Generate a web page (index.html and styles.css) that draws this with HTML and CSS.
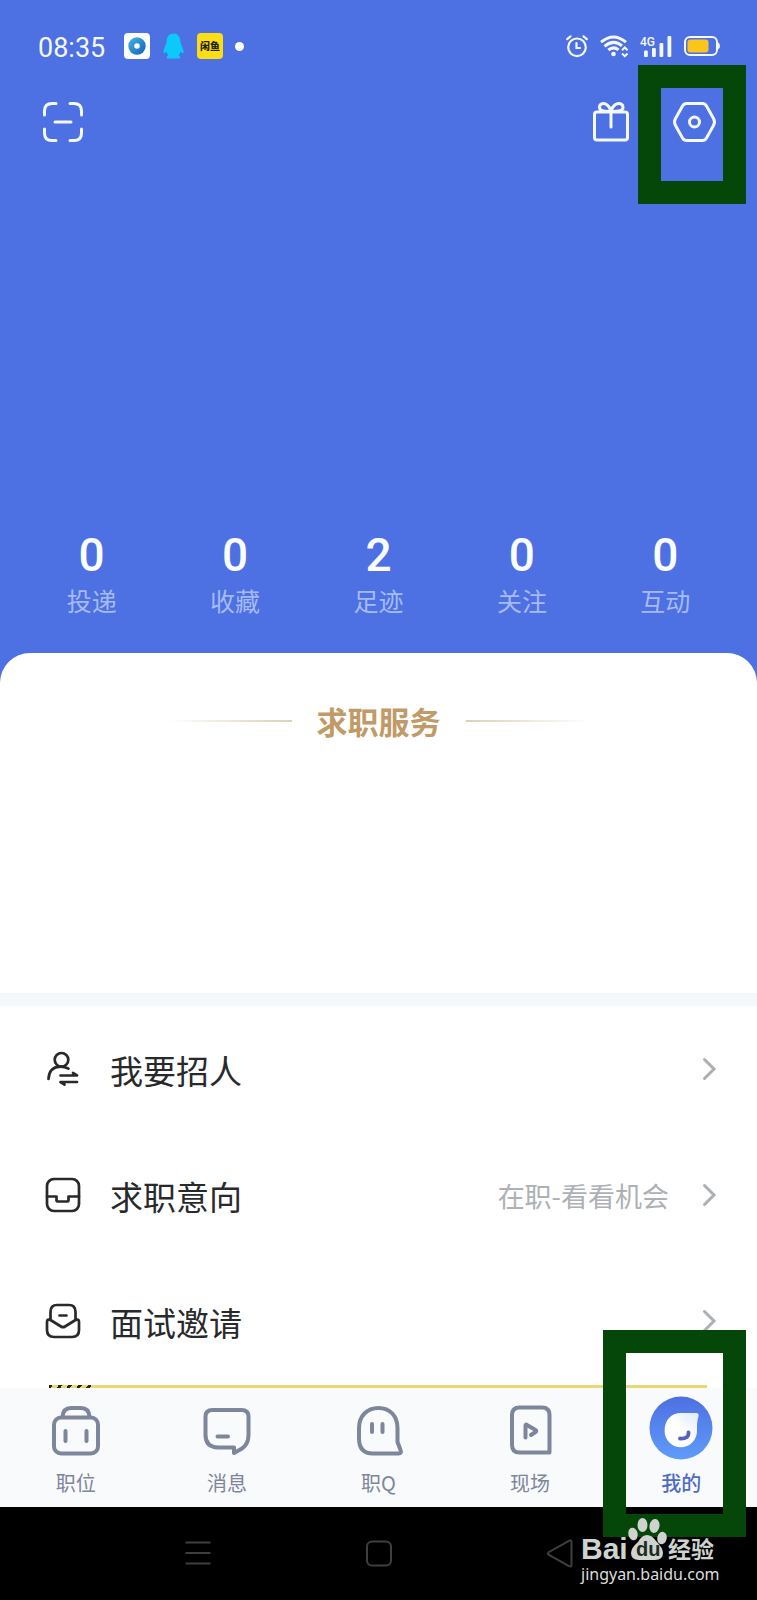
FILE: index.html
```html
<!DOCTYPE html>
<html lang="zh-CN">
<head>
<meta charset="utf-8">
<meta name="viewport" content="width=device-width, initial-scale=1">
<title>我的</title>
<link rel="stylesheet" href="styles.css">
</head>
<body>
<div class="app">
  <header class="hero">
    <div class="status">
      <div class="status-left">
        <span class="time">08:35</span>
        <svg class="app-icon" viewBox="0 0 26 26" aria-hidden="true">
          <defs><linearGradient id="disc" x1="0" y1="0" x2="1" y2="1"><stop offset="0" stop-color="#45b4ea"/><stop offset="1" stop-color="#1161b4"/></linearGradient></defs>
          <rect width="26" height="26" rx="4" fill="#fbfdff"/><circle cx="13" cy="13" r="8.700" fill="url(#disc)"/><circle cx="13" cy="13" r="2.800" fill="#fff"/>
        </svg>
        <svg class="penguin" viewBox="0 0 21 26" aria-hidden="true"><path fill="#0cc8fb" d="M10.500 0.500C6 0.500 3.700 4 3.700 8.500C3.500 11 1 14.500 0.500 18C0.300 20 1 21 2 20L3.300 18.500Q3.800 20.700 5.300 22Q3.500 23 3.600 25.500H17.400Q17.500 23 15.700 22Q17.200 20.700 17.700 18.500L19 20C20 21 20.700 20 20.500 18C20 14.500 17.500 11 17.300 8.500C17.300 4 15 0.500 10.500 0.500Z"/></svg>
        <span class="fish">闲鱼</span>
        <span class="dot"></span>
      </div>
      <div class="status-right">
        <svg class="alarm" viewBox="0 0 22 22" fill="none" stroke="#f4f8ff" stroke-width="2.200" stroke-linecap="round" aria-hidden="true"><circle cx="11" cy="12.300" r="8.800"/><path d="M10.500 8v5h3.500M1.200 4.200L4.500 1.300M20.800 4.200L17.500 1.300"/></svg>
        <svg class="wifi" viewBox="0 0 28 22" fill="none" stroke="#f4f8ff" stroke-width="3" aria-hidden="true"><path d="M1 7.200Q13.500 -3.300 26 7.200M4.500 11.300Q13.500 3.600 22 10.800M8.300 15Q13.500 10.800 18.500 14.900"/><circle cx="13.500" cy="19" r="2.300" fill="#f4f8ff" stroke="none"/><path stroke-width="2" d="M22 15.200L24.800 12.500L27.600 15.200M22 18.500L24.800 21.200L27.600 18.500"/></svg>
        <svg class="signal" viewBox="0 0 32 22" aria-hidden="true"><g fill="#f4f8ff"><rect x="4" y="15.500" width="3.800" height="6.500" rx="1"/><rect x="12" y="13" width="3.800" height="9" rx="1"/><rect x="19.500" y="8" width="3.800" height="14" rx="1"/><rect x="27.500" y="1" width="3.800" height="21" rx="1"/><text x="0" y="11" class="net">4G</text></g></svg>
        <svg class="battery" viewBox="0 0 36 20" aria-hidden="true"><rect x="1" y="1" width="32" height="18" rx="5" fill="none" stroke="#f4f8ff" stroke-width="2"/><rect x="3.500" y="3.500" width="21" height="13" rx="3" fill="#fdc41b"/><path d="M34 6.500Q36 7 36 10T34 13.500Z" fill="#f4f8ff"/></svg>
      </div>
    </div>
    <div class="toolbar">
      <button class="tool" aria-label="扫一扫"><svg class="i-scan" viewBox="0 0 40 40" aria-hidden="true"><path d="M1.500 13V9Q1.500 1.500 9 1.500H13M27 1.500H31Q38.500 1.500 38.500 9V13M38.500 27V31Q38.500 38.500 31 38.500H27M13 38.500H9Q1.500 38.500 1.500 31V27M12 20H28"/></svg></button>
      <span class="spacer"></span>
      <button class="tool" aria-label="礼物"><svg class="i-gift" viewBox="0 0 36 40" aria-hidden="true"><rect x="1.500" y="10" width="33" height="28" rx="2.500"/><path d="M18 10V25M18 9.500C14.500 9.500 6.500 10 6.500 5.500C6.500 1 11 1 13.500 2.500Q17 4.800 18 9.500C21.500 9.500 30 10 30 5.500C30 1 25.500 1 22.500 2.500Q19 4.800 18 9.500Z"/></svg></button>
      <button class="tool" aria-label="设置"><svg class="i-gear" viewBox="0 0 43 40" aria-hidden="true"><path d="M13.500 1.500H29.500Q32 1.500 33.500 4L40.500 16.500Q42.500 20 40.500 23.500L33.500 36Q32 38.500 29.500 38.500H13.500Q11 38.500 9.500 36L2.500 23.500Q0.500 20 2.500 16.500L9.500 4Q11 1.500 13.500 1.500Z"/><circle cx="21.500" cy="20" r="5"/></svg></button>
    </div>
    <dl class="stats">
      <div><dd>0</dd><dt>投递</dt></div>
      <div><dd>0</dd><dt>收藏</dt></div>
      <div><dd>2</dd><dt>足迹</dt></div>
      <div><dd>0</dd><dt>关注</dt></div>
      <div><dd>0</dd><dt>互动</dt></div>
    </dl>
    <span class="mark mark-top"></span>
  </header>

  <main>
    <section class="services"><h2>求职服务</h2></section>
    <nav class="list">
      <a class="row" href="#recruit">
        <svg class="row-icon" viewBox="0 0 36 36" aria-hidden="true"><circle cx="16.500" cy="8.800" r="6.800"/><path d="M3.500 28C4 20 8.500 15.700 15.500 15.700Q20 15.700 23.500 17.700M15.500 24.500H32L28 22M32 31H15.500L19.500 33.500"/></svg>
        <span class="name">我要招人</span>
        <svg class="chev" viewBox="0 0 12 22" aria-hidden="true"><path d="M1.500 1.500L11 11L1.500 20.500"/></svg>
      </a>
      <a class="row" href="#intent">
        <svg class="row-icon" viewBox="0 0 36 36" aria-hidden="true"><rect x="2" y="2" width="32" height="32" rx="7"/><path d="M2 19.500H11.500V23.500Q11.500 24.500 12.500 24.500H22.500Q23.500 24.500 23.500 23.500V19.500H34"/></svg>
        <span class="name">求职意向</span>
        <span class="value">在职-看看机会</span>
        <svg class="chev" viewBox="0 0 12 22" aria-hidden="true"><path d="M1.500 1.500L11 11L1.500 20.500"/></svg>
      </a>
      <a class="row" href="#interview">
        <svg class="row-icon" viewBox="0 0 36 36" aria-hidden="true"><path d="M5.500 17V9Q5.500 2 12 2H24Q30.500 2 30.500 9V17M14.500 12.500H21.500M5.500 17Q2 15.500 2 19V27Q2 34 9 34H27Q34 34 34 27V19Q34 15.500 30.500 17L20 23.500Q18 24.800 16 23.500Z"/></svg>
        <span class="name">面试邀请</span>
        <svg class="chev" viewBox="0 0 12 22" aria-hidden="true"><path d="M1.500 1.500L11 11L1.500 20.500"/></svg>
      </a>
    </nav>
  </main>

  <footer>
    <div class="banner-edge"></div>
    <nav class="tabs">
      <a href="#jobs"><svg class="tab-icon" viewBox="0 0 48 50" aria-hidden="true"><path d="M10.500 11Q11 2 19 2H29Q37 2 37.500 11"/><rect x="2" y="11.500" width="44" height="36" rx="7"/><path d="M13.500 25V35M34.500 25V35"/></svg><span>职位</span></a>
      <a href="#messages"><svg class="tab-icon" viewBox="0 0 48 50" aria-hidden="true"><path d="M9.500 4H38.500Q45.500 4 45.500 10.500V29Q45.500 38 39 42.500L31 47V41.500H15Q2.500 41 2.500 29V10.500Q2.500 4 9.500 4ZM14.500 30.500H25"/></svg><span>消息</span></a>
      <a href="#community"><svg class="tab-icon" viewBox="0 0 48 50" aria-hidden="true"><path d="M19 47.500H44.500Q48 47.500 46.500 44L43.500 36V22C43.500 10 36 2 24.500 2S5 10 5 22V32.500Q5 47.500 19 47.500ZM18 18V26M28.500 18V26"/></svg><span>职Q</span></a>
      <a href="#live"><svg class="tab-icon" viewBox="0 0 48 50" aria-hidden="true"><path d="M13.500 1.500H36Q43.500 1.500 43.500 9V46.500H13.500Q6 46.500 6 39V9Q6 1.500 13.500 1.500ZM19.500 31.500V19.500Q19.500 18 21 19L29.500 24Q31 25 29.500 26L25 29"/></svg><span>现场</span></a>
      <a class="active" href="#me"><svg class="me-icon" viewBox="0 0 64 64" aria-hidden="true">
        <defs><linearGradient id="me-bg" x1="0" y1="0" x2="0" y2="1"><stop offset="0" stop-color="#4d70e2"/><stop offset="1" stop-color="#5f9bfb"/></linearGradient><linearGradient id="me-face" x1="0" y1="1" x2="1" y2="0"><stop offset=".5" stop-color="#fff"/><stop offset="1" stop-color="#dce9fb"/></linearGradient></defs>
        <circle cx="32" cy="32" r="31.500" fill="url(#me-bg)"/><path fill="url(#me-face)" d="M32 17H47Q50.500 17 49.500 20.500C48 25 48 29 48 35A16.200 16.200 0 1 1 15.600 35C15.600 24 22 17 32 17Z"/><path d="M31 42.500Q40 43 39.500 36.500" fill="none" stroke="#5362bd" stroke-width="3.800" stroke-linecap="round"/></svg><span>我的</span></a>
    </nav>
    <div class="sysbar">
      <button aria-label="菜单"><svg viewBox="0 0 28 28" aria-hidden="true"><path d="M1.500 2.500H26.500M1.500 13H26.500M1.500 23.500H26.500"/></svg></button>
      <button aria-label="主页"><svg viewBox="0 0 28 28" aria-hidden="true"><rect x="2" y="1.500" width="24" height="24" rx="5"/></svg></button>
      <button aria-label="返回"><svg viewBox="0 0 28 28" aria-hidden="true"><path d="M25.500 2V25Q25.500 27.500 23 26L3 15Q1 13.500 3 12L23 0.800Q25.500 -0.500 25.500 2Z"/></svg></button>
    </div>
    <span class="mark mark-bottom"></span>
    <div class="brand">
      <svg class="brand-logo" viewBox="0 0 136 46" role="img" aria-label="Baidu 经验">
        <text x="0" y="42" class="brand-latin">Bai</text>
        <g fill="#cfd3cf"><ellipse cx="52" cy="17" rx="4.700" ry="6.300" transform="rotate(-12 52 17)"/><ellipse cx="61.500" cy="8" rx="5" ry="7"/><ellipse cx="73.500" cy="9" rx="5" ry="7" transform="rotate(10 73.500 9)"/><ellipse cx="81" cy="21" rx="4.700" ry="6.300" transform="rotate(14 81 21)"/><path d="M66 18Q71 18 75 24Q82 31 82 36Q82 43 74 43H58Q50 43 50 36Q50 31 57 25Q61 18 66 18Z"/></g>
        <text x="55" y="39" class="brand-du">du</text>
        <text x="87" y="41" class="brand-cn">经验</text>
      </svg>
      <span class="brand-url">jingyan.baidu.com</span>
    </div>
  </footer>
</div>
</body>
</html>
```
FILE: styles.css
```css
* { box-sizing: border-box; }
body {
  margin: 0;
  background: #fff;
  color: #28292b;
  font-family: "Noto Sans CJK SC", "Noto Sans", sans-serif;
}
.app { display: flex; flex-direction: column; min-height: 100vh; overflow: hidden; }
a { color: inherit; text-decoration: none; }
button { padding: 0; border: 0; background: none; cursor: pointer; }
svg { display: block; overflow: visible; }
h2, dl, dd, dt { margin: 0; }

.hero {
  position: relative;
  padding: 32px 20px 65px;
  background: #4d70e2;
}
.status { display: flex; justify-content: space-between; align-items: center; height: 28px; padding: 0 17px 0 18px; }
.status-left { display: flex; align-items: center; }
.status-right { display: flex; align-items: center; gap: 12px; }
.time { width: 86px; padding-top: 4px; color: #f4f8ff; font: 27px/28px Roboto, sans-serif; }
.app-icon { width: 26px; height: 26px; }
.penguin { width: 21px; height: 26px; margin: 0 13px; }
.fish { width: 26px; border-radius: 4px; background: #fbdf14; color: #24230c; font-size: 10px; font-weight: 900; line-height: 26px; text-align: center; }
.dot { width: 9px; height: 9px; margin-left: 12px; border-radius: 50%; background: #fff; }
.alarm { width: 22px; height: 22px; }
.wifi { width: 28px; height: 22px; }
.signal { width: 32px; height: 22px; }
.net { font: 500 12px Roboto, sans-serif; }
.battery { width: 36px; height: 20px; }

.toolbar { display: flex; align-items: center; gap: 44px; margin-top: 42px; padding: 0 21px 0 23px; }
.spacer { flex: 1; }
.tool svg { height: 40px; fill: none; stroke: #f4f8ff; stroke-width: 3; stroke-linecap: round; stroke-linejoin: round; }
.i-scan { width: 40px; }
.i-gift { width: 36px; }
.i-gear { width: 43px; }

.stats { display: grid; grid-template-columns: repeat(5, 1fr); margin-top: 384px; text-align: center; }
.stats div { display: flex; flex-direction: column; }
.stats dd { padding-top: 2px; color: #fafcff; font: 500 46px/54px Roboto, sans-serif; }
.stats dt { color: #a6baf5; font-size: 25px; line-height: 36px; }

.mark { position: absolute; z-index: 2; border: 23px solid #044708; pointer-events: none; }
.mark-top { top: 65px; right: 11px; width: 108px; height: 139px; }
.mark-bottom { top: -55px; right: 11px; width: 143px; height: 207px; }

.services {
  position: relative;
  min-height: 340px;
  margin-top: -30px;
  padding-top: 48px;
  border-radius: 30px 30px 0 0;
  background: #fff;
}
.services h2 { display: flex; align-items: center; justify-content: center; gap: 25px; color: #c09a67; font-size: 31px; font-weight: 700; line-height: 40px; }
.services h2::before, .services h2::after { content: ""; width: 124px; height: 2px; background: linear-gradient(90deg, transparent, #dccfb8); }
.services h2::after { background: linear-gradient(90deg, #dccfb8, transparent); }

.list { padding-bottom: 1px; border-top: 13px solid #f5f8fb; }
.row { display: flex; align-items: center; height: 126px; padding: 0 42px 0 45px; }
.row-icon { width: 36px; height: 36px; fill: none; stroke: #28292b; stroke-width: 2.7; stroke-linecap: round; stroke-linejoin: round; }
.name { flex: 1; margin-left: 29px; padding-top: 2px; font-size: 33px; line-height: 48px; }
.value { margin-right: 34px; padding-top: 2px; color: #adb1b5; font-size: 27px; line-height: 40px; }
.chev { width: 12px; height: 22px; fill: none; stroke: #adb0b3; stroke-width: 3; stroke-linecap: round; }

footer { position: relative; display: flex; flex: 1; flex-direction: column; }
.banner-edge {
  height: 3px;
  margin: 0 50px 0 49px;
  background: repeating-linear-gradient(125deg, #28230c 0 3px, #ecd66f 3px 8px) 0 0 / 45px 3px no-repeat, #ecd66f;
}
.tabs { display: grid; grid-template-columns: repeat(5, 1fr); height: 119px; background: #f9fafb; color: #7e869c; }
.tabs a { display: flex; flex-direction: column; align-items: center; justify-content: flex-end; padding-bottom: 8px; font-size: 20px; line-height: 32px; }
.tab-icon { width: 48px; height: 50px; margin-bottom: 11px; fill: none; stroke: #7e869c; stroke-width: 4; stroke-linecap: round; stroke-linejoin: round; }
.me-icon { width: 64px; height: 64px; margin-bottom: 7px; }
.tabs .active { color: #4d6bc9; font-weight: 500; }

.sysbar { display: flex; flex: 1; justify-content: center; gap: 153px; min-height: 91px; padding-top: 33px; background: #000; }
.sysbar button { width: 28px; height: 28px; }
.sysbar svg { width: 28px; height: 28px; fill: none; stroke: #3f3f3f; stroke-width: 2; }

.brand { position: absolute; z-index: 3; right: 40px; bottom: 15px; width: 136px; color: #dcdedc; }
.brand-logo { width: 136px; height: 46px; }
.brand-latin { fill: #cfd3cf; font: 700 30px "Liberation Sans", sans-serif; }
.brand-du { fill: #1c2b1e; font: 700 20px "Liberation Sans", sans-serif; }
.brand-cn { fill: #cfd3cf; font: 700 23px "Noto Sans CJK SC", sans-serif; }
.brand-url { display: block; font: 16px/22px "Noto Sans", sans-serif; }
```
